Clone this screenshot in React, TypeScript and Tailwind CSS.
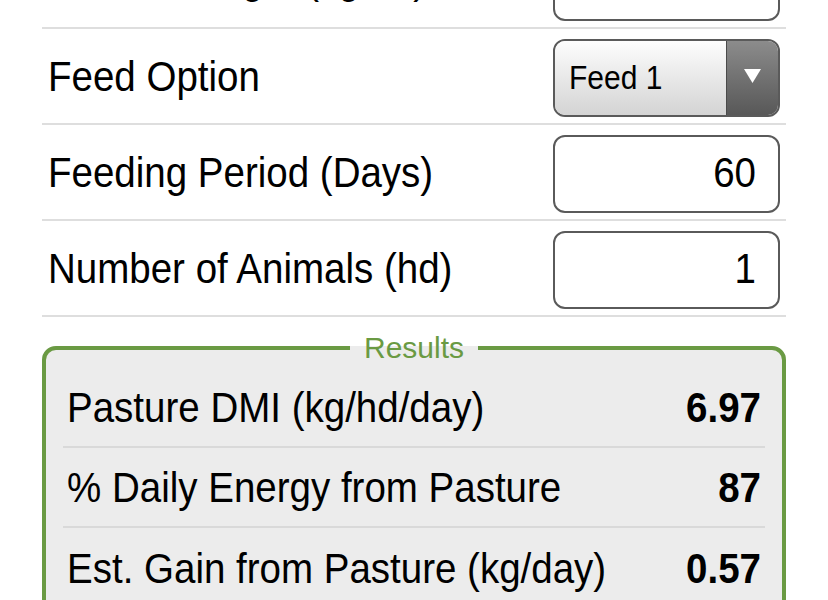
import React from 'react';

const font = { fontFamily: '"Liberation Sans", Arial, Helvetica, sans-serif' };

interface FieldRowProps {
  label: string;
  children: React.ReactNode;
  className?: string;
  labelClassName?: string;
}

function FieldRow({ label, children, className = '', labelClassName = 'mt-[3px]' }: FieldRowProps) {
  return (
    <div className={`flex h-[96px] items-center justify-between border-b-2 border-[#dedede] pl-[6px] pr-[6px] ${className}`}>
      <span className={`inline-block scale-y-[1.09] text-[38.5px] leading-none text-black ${labelClassName}`}>{label}</span>
      <div className="mt-[3px]">{children}</div>
    </div>
  );
}

function NumberBox({ value }: { value: string }) {
  return (
    <div className="flex h-[78px] w-[227px] items-center justify-end rounded-[12px] border-2 border-[#5a5a5a] bg-white pr-[22px] text-[38.5px] leading-none text-black">
      <span className="inline-block scale-y-[1.09]">{value}</span>
    </div>
  );
}

function FeedSelect() {
  return (
    <div className="flex h-[78px] w-[227px] overflow-hidden rounded-[12px] border-2 border-[#5a5a5a]">
      <div className="flex flex-1 items-center bg-gradient-to-b from-[#fdfdfd] to-[#d4d4d4] pl-[14px] text-[30px] leading-none text-black">
        <span className="inline-block scale-y-[1.09]">Feed 1</span>
      </div>
      <div className="flex w-[52px] items-start justify-center border-l border-[#4a4a4a] bg-gradient-to-b from-[#8c8c8c] to-[#585858] pt-[27px]">
        <svg width="19" height="16" viewBox="0 0 19 16">
          <path d="M1 1 L18 1 L9.5 15 Z" fill="#ffffff" />
        </svg>
      </div>
    </div>
  );
}

interface ResultRowProps {
  label: string;
  value: string;
  last?: boolean;
}

function ResultRow({ label, value, last }: ResultRowProps) {
  return (
    <div className={`flex h-[80px] items-center justify-between pl-[4px] pr-[4px] ${last ? '' : 'border-b-2 border-[#d9d9d9]'}`}>
      <span className="mt-[3px] inline-block scale-y-[1.09] text-[38.5px] leading-none text-black">{label}</span>
      <span className="mt-[3px] inline-block scale-y-[1.09] text-[38.5px] font-bold leading-none text-black">{value}</span>
    </div>
  );
}

export default function App() {
  return (
    <div className="h-[600px] w-[828px] overflow-hidden bg-white" style={font}>
      <div className="ml-[42px] mr-[42px]">
        {/* row scrolled mostly out of view */}
        <FieldRow label="Animal Weight (kg/hd)" className="-mt-[67px]" labelClassName="-mt-[2px]">
          <NumberBox value="" />
        </FieldRow>
        <FieldRow label="Feed Option">
          <FeedSelect />
        </FieldRow>
        <FieldRow label="Feeding Period (Days)">
          <NumberBox value="60" />
        </FieldRow>
        <FieldRow label="Number of Animals (hd)">
          <NumberBox value="1" />
        </FieldRow>

        <fieldset className="mt-[16px] rounded-[14px] border-4 border-[#6a9a43] bg-[#ececec] px-[17px] pb-4">
          <legend className="mx-auto px-[14px] text-[30px] leading-[30px] text-[#6a9a43]">Results</legend>
          <div className="pt-[5px]">
            <ResultRow label="Pasture DMI (kg/hd/day)" value="6.97" />
            <ResultRow label="% Daily Energy from Pasture" value="87" />
            <ResultRow label="Est. Gain from Pasture (kg/day)" value="0.57" last />
          </div>
        </fieldset>
      </div>
    </div>
  );
}
